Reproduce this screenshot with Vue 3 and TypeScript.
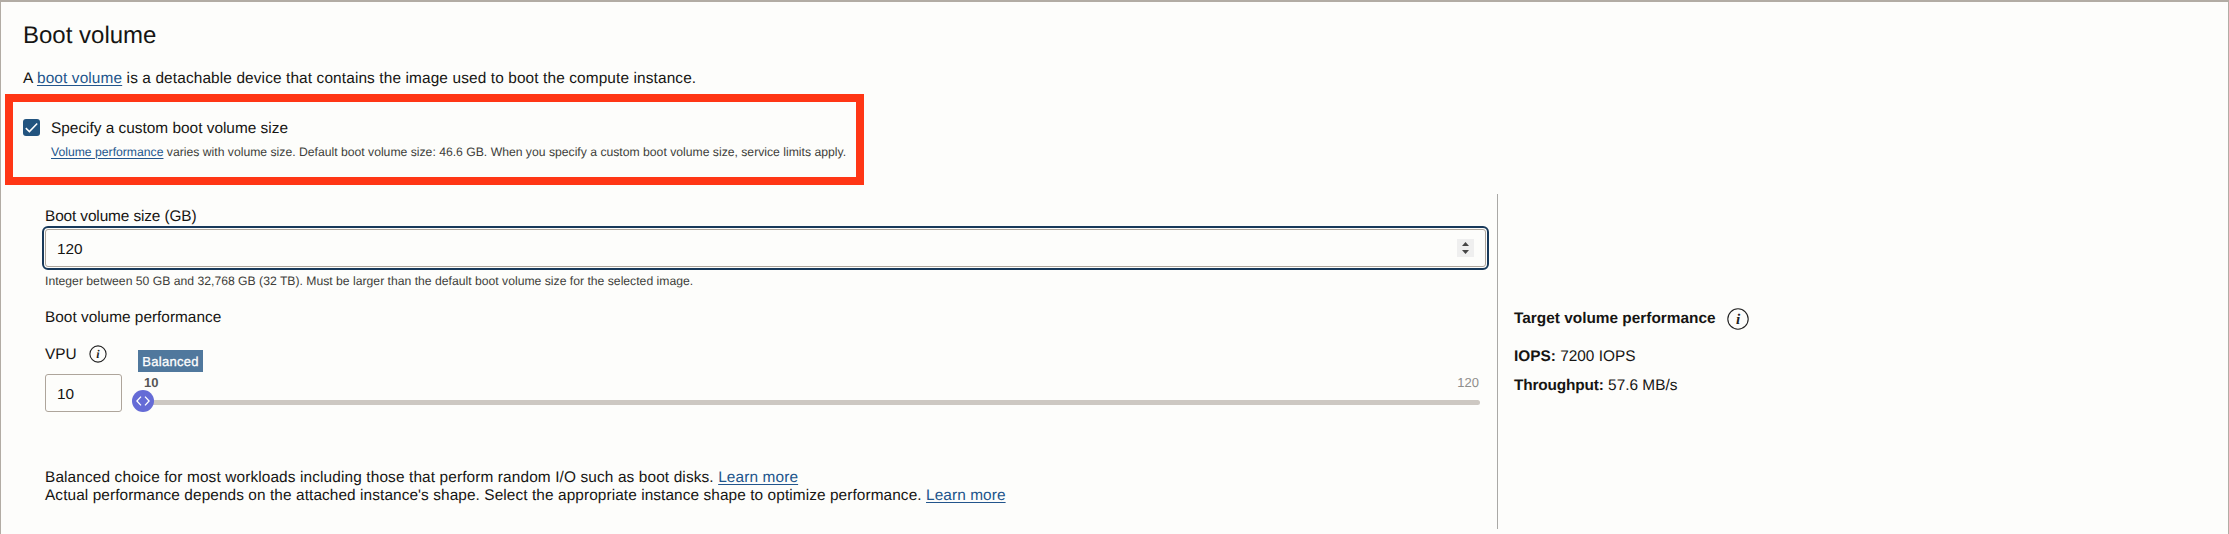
<script setup lang="ts">
import { ref } from 'vue'

const custom = ref(true)
const size = ref('120')
const vpu = ref('10')
</script>

<template>
  <section class="panel">
    <h2>Boot volume</h2>
    <p class="intro">A <a>boot volume</a> is a detachable device that contains the image used to boot the compute instance.</p>

    <div class="highlight">
      <button class="check" role="checkbox" :aria-checked="custom" @click="custom = !custom">
        <svg v-if="custom" width="17" height="17" viewBox="0 0 17 17"><path d="M2.8 9.1 6.4 12.6 14.2 4.4" fill="none" stroke="#fff" stroke-width="1.5" /></svg>
      </button>
      <div>
        <div class="check-label">Specify a custom boot volume size</div>
        <div class="hint check-hint"><a>Volume performance</a> varies with volume size. Default boot volume size: 46.6 GB. When you specify a custom boot volume size, service limits apply.</div>
      </div>
    </div>

    <div class="body">
      <div class="form">
        <div class="size-label">Boot volume size (GB)</div>
        <div class="number">
          <input v-model="size" aria-label="Boot volume size" />
          <svg class="spin" width="17" height="18" viewBox="0 0 17 18"><path d="M0 0h17v18H0z" fill="#efefef" /><path d="M5 7 8.5 3 12 7zM5 11h7l-3.5 4z" fill="#464646" /></svg>
        </div>
        <div class="hint size-hint">Integer between 50 GB and 32,768 GB (32 TB). Must be larger than the default boot volume size for the selected image.</div>
        <div class="perf-label">Boot volume performance</div>

        <div class="vpu">
          <div class="vpu-left">
            <div class="vpu-head">
              <span>VPU</span>
              <svg class="info" width="18" height="18" viewBox="0 0 18 18"><circle cx="9" cy="9" r="8.1" /><text x="9" y="13" font-size="12">i</text></svg>
            </div>
            <input v-model="vpu" class="vpu-input" aria-label="VPU" />
          </div>
          <div class="slider">
            <div class="tag">Balanced</div>
            <div class="scale"><b>10</b><span>120</span></div>
            <div class="track">
              <svg class="thumb" width="22" height="22" viewBox="0 0 22 22"><circle cx="11" cy="11" r="11" fill="#656bd6" /><path d="M9 6.6 4.9 11 9 15.4M13 6.6 17.1 11 13 15.4" fill="none" stroke="#fff" stroke-width="1.3" /></svg>
            </div>
          </div>
        </div>

        <div class="notes">
          <div class="note-a">Balanced choice for most workloads including those that perform random I/O such as boot disks. <a>Learn more</a></div>
          <div class="note-b">Actual performance depends on the attached instance's shape. Select the appropriate instance shape to optimize performance. <a>Learn more</a></div>
        </div>
      </div>

      <aside>
        <div class="target">
          <b>Target volume performance</b>
          <svg class="info" width="22" height="22" viewBox="0 0 22 22"><circle cx="11" cy="11" r="10.2" /><text x="11" y="15.6" font-size="15">i</text></svg>
        </div>
        <div class="iops"><b>IOPS:</b> 7200 IOPS</div>
        <div class="through"><b>Throughput:</b> 57.6 MB/s</div>
      </aside>
    </div>
  </section>
</template>

<style>
body { margin: 0; background: #fdfdfb; }
</style>

<style scoped>
* { box-sizing: border-box; }
.panel {
  height: 534px;
  overflow: hidden;
  border: solid #b2aca4;
  border-width: 2px 1px 0;
  padding-top: 20px;
  background: #fdfdfb;
  color: #161513;
  font: 15.4px/20px "Liberation Sans", Arial, sans-serif;
  text-rendering: geometricPrecision;
  white-space: nowrap;
}
h2 { margin: 0 0 19px 22px; font-size: 24px; line-height: 28px; font-weight: 400; }
.intro { margin: 0 0 5px 22px; letter-spacing: .125px; }
a { color: #22558c; text-decoration: underline; text-decoration-thickness: 1px; text-underline-offset: 2px; }
.highlight {
  display: flex;
  gap: 11px;
  width: 859px;
  height: 91px;
  margin-left: 4px;
  padding: 16px 0 0 10px;
  border: 8px solid #ff3615;
}
.check { display: block; width: 17px; height: 17px; margin-top: 1px; padding: 0; border: 0; border-radius: 3px; background: #22547f; }
.check svg { display: block; }
.check-label { padding-top: 1px; }
.hint { font-size: 12.2px; line-height: 16px; color: #403d3a; }
.check-hint { margin-top: 5px; }
.body { display: flex; height: 335px; margin-top: 9px; }
.form { width: 1497px; padding: 13px 11px 0 44px; border-right: 1px solid #aaa9a6; }
.size-label { letter-spacing: -.12px; }
.number {
  display: flex;
  align-items: center;
  justify-content: space-between;
  height: 38px;
  margin-top: 2px;
  padding: 0 11px;
  border: 1px solid #aea59b;
  border-radius: 3px;
  outline: 2px solid #18395a;
  outline-offset: 1px;
}
input { min-width: 0; padding: 1px 0 0; border: 0; outline: 0; background: transparent; color: inherit; font: inherit; }
.spin { display: block; }
.size-hint { margin-top: 6px; }
.perf-label { margin-top: 19px; }
.vpu { display: flex; margin-top: 16px; height: 68px; }
.vpu-left { width: 77px; }
.vpu-head { display: flex; gap: 12px; height: 30px; padding-top: 1px; }
.vpu-input { display: block; width: 77px; height: 38px; padding: 1px 11px 0; border: 1px solid #aea59b; border-radius: 3px; }
.info circle { fill: none; stroke: #222; stroke-width: 1.1; }
.info text { fill: #222; font-family: "Liberation Serif", serif; font-style: italic; font-weight: 700; text-anchor: middle; }
.slider { flex: 1; padding: 6px 6px 0 16px; }
.tag { width: 65px; height: 22px; background: #50789d; color: #fff; font-size: 13px; line-height: 24px; letter-spacing: .3px; text-align: center; -webkit-text-stroke: .3px #fff; }
.scale { display: flex; justify-content: space-between; height: 28px; padding: 3px 1px 0 6px; font-size: 13px; line-height: 16px; color: #8f8e8c; }
.scale b { color: #555; }
.track { position: relative; height: 5px; border-radius: 3px; background: #cdc8c2; }
.thumb { position: absolute; left: -6px; top: -10px; }
.notes { margin-top: 57px; line-height: 18px; }
.note-a { letter-spacing: .125px; }
.note-b { letter-spacing: .085px; }
aside { padding: 114px 0 0 16px; }
.target { display: flex; align-items: center; gap: 11px; height: 22px; }
.iops { margin-top: 17px; }
.through { margin-top: 9px; }
.through b { letter-spacing: -.15px; }
</style>
